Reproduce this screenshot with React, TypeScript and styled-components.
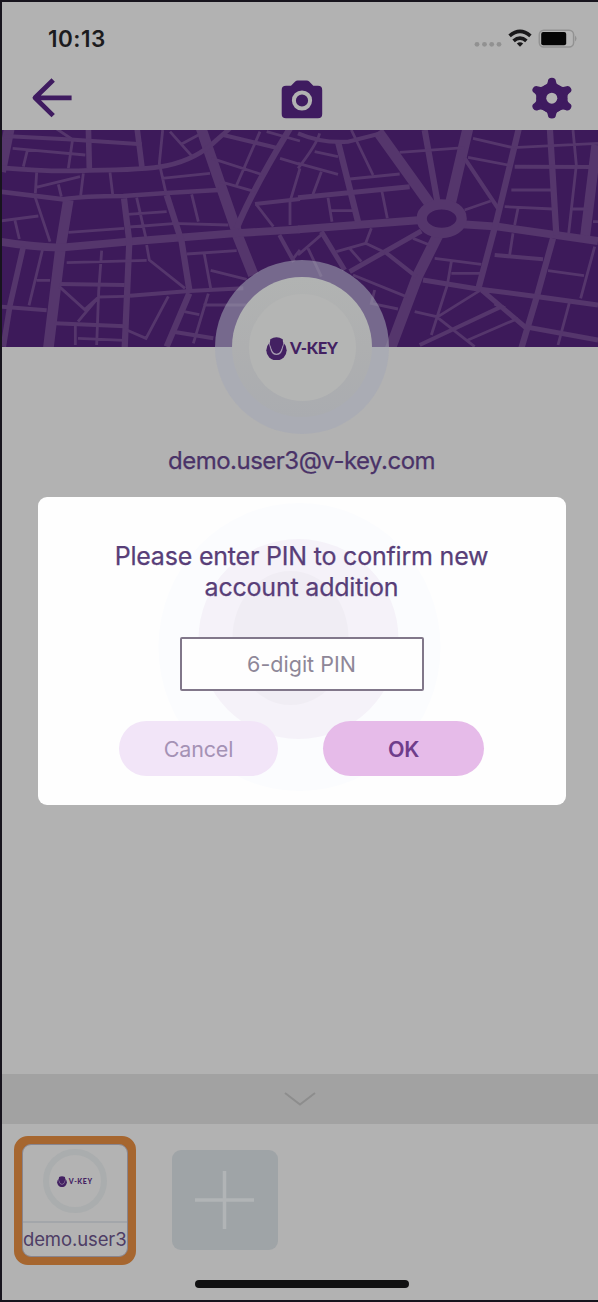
import React from "react";
import styled, { createGlobalStyle } from "styled-components";

const Global = createGlobalStyle`
  * { box-sizing: border-box; }
  body { margin: 0; background: #17141d; font-family: Inter, "Liberation Sans", sans-serif; }
  button, input { font-family: inherit; }
`;

const Screen = styled.div`
  position: relative;
  width: 598px;
  height: 1302px;
  border: solid #17141d;
  border-width: 2px 0 2px 2px;
  background: #b2b2b2;
  display: flex;
  flex-direction: column;
  overflow: hidden;
`;

const StatusBar = styled.div`
  height: 72px;
  flex: none;
  display: flex;
  justify-content: space-between;
  align-items: flex-start;
  padding: 23px 21px 0 46px;
`;

const Clock = styled.span`
  font-size: 22.5px;
  line-height: 28px;
  font-weight: 600;
  letter-spacing: 0.5px;
  color: #1c1b1d;
`;

const NavBar = styled.div`
  height: 56px;
  flex: none;
  display: flex;
  justify-content: space-between;
  padding: 3px 25px 0 29px;
`;

const Cover = styled.div`
  height: 217px;
  flex: none;
  background: #3d1a5a;
`;

const Profile = styled.div`
  display: flex;
  flex-direction: column;
  align-items: center;
  margin-top: -87px;
  padding-left: 4px;
  flex: 1;
`;

const Halo = styled.div`
  width: 174px;
  height: 174px;
  flex: none;
  border-radius: 50%;
  background: rgba(164, 168, 181, 0.56);
  display: grid;
  place-items: center;
  z-index: 0;
`;

const Ring = styled.div`
  width: 140px;
  height: 140px;
  border-radius: 50%;
  background: linear-gradient(#b1b3b2 0%, #aeafb0 50%, #aaacb0 100%);
  display: grid;
  place-items: center;
`;

const Disc = styled.div`
  width: 107px;
  height: 107px;
  border-radius: 50%;
  background: #b4b5b4;
  display: flex;
  align-items: center;
  justify-content: center;
  gap: 2.5px;
  padding-top: 3px;
`;

const Brand = styled.span<{ $small?: boolean }>`
  font-family: Lato, sans-serif;
  font-weight: 900;
  font-size: ${(p) => (p.$small ? 7 : 16.5)}px;
  line-height: 1;
  letter-spacing: ${(p) => (p.$small ? 0.6 : -0.3)}px;
  color: #432162;
`;

const Email = styled.div`
  margin-top: 11.5px;
  margin-right: 1px;
  font-size: 24px;
  line-height: 30px;
  letter-spacing: -0.5px;
  -webkit-text-stroke: 0.25px #4a3368;
  color: #4a3368;
`;

const Handle = styled.div`
  height: 50px;
  flex: none;
  background: #a2a2a2;
  display: flex;
  align-items: center;
  justify-content: center;
`;

const Tray = styled.div`
  height: 156px;
  flex: none;
  display: flex;
  gap: 36px;
  padding: 12px 0 0 12px;
`;

const Account = styled.div`
  width: 121.5px;
  height: 129px;
  border-radius: 14px;
  border: 8px solid #a6662f;
  display: flex;
  flex-direction: column;
  align-items: center;
  background: #a6662f;
`;

const AccountFace = styled.div`
  width: 106px;
  height: 113px;
  border: 1px solid #88858f;
  border-radius: 9px;
  background: #b3b3b3;
  display: flex;
  flex-direction: column;
  align-items: center;
`;

const MiniRing = styled.div`
  margin-top: 4px;
  width: 64px;
  height: 64px;
  flex: none;
  border-radius: 50%;
  border: 6.5px solid #aaadae;
  display: flex;
  align-items: center;
  justify-content: center;
  gap: 2px;
  padding-top: 1px;
`;

const AccountName = styled.div`
  margin-top: 7.5px;
  width: 104px;
  border-top: 2px solid #a3a6aa;
  padding-top: 2px;
  font-size: 18.5px;
  line-height: 28px;
  letter-spacing: -0.1px;
  white-space: nowrap;
  display: flex;
  justify-content: center;
  color: #4e3d65;
`;

const AddAccount = styled.button`
  margin: 14px 0 0;
  padding: 0;
  width: 106px;
  height: 100px;
  border: 0;
  border-radius: 9px;
  background: #9fa4a7;
  display: grid;
  place-items: center;
`;

const HomeIndicator = styled.div`
  width: 214px;
  height: 8px;
  flex: none;
  margin: 0 0 12px 193px;
  border-radius: 4px;
  background: #111112;
`;

const Dialog = styled.div`
  position: absolute;
  left: 35.5px;
  top: 495px;
  width: 528px;
  height: 308px;
  border-radius: 9px;
  overflow: hidden;
  background: #fefefe;
`;

const Ripples = styled.svg`
  position: absolute;
  inset: 0;
`;

const DialogBody = styled.div`
  position: relative;
  display: flex;
  flex-direction: column;
  align-items: center;
  padding-top: 44px;
`;

const Prompt = styled.div`
  font-size: 25px;
  line-height: 31px;
  text-align: center;
  white-space: nowrap;
  letter-spacing: -0.2px;
  -webkit-text-stroke: 0.25px #583e78;
  color: #583e78;
`;

const PinInput = styled.input`
  margin-top: 34px;
  width: 244px;
  height: 54px;
  padding: 0;
  border: 2px solid #81778a;
  border-radius: 2px;
  background: #fefefe;
  text-align: center;
  font-size: 21.5px;
  outline: none;
  &::placeholder { color: #8e8798; opacity: 1; }
`;

const Actions = styled.div`
  display: flex;
  gap: 45px;
  margin-top: 30px;
`;

const Pill = styled.button<{ $primary?: boolean }>`
  width: ${(p) => (p.$primary ? 161 : 159)}px;
  height: 55px;
  padding: 0;
  border: 0;
  border-radius: 28px;
  background: ${(p) => (p.$primary ? "#e6bbe9" : "#f2e5f8")};
  color: ${(p) => (p.$primary ? "#6f3d8b" : "#a592b5")};
  font-size: 21.5px;
  letter-spacing: -0.2px;
  font-weight: ${(p) => (p.$primary ? 600 : 400)};
`;

const P = "#3f1b60";

const StatusIcons = () => (
  <svg width="106" height="30" viewBox="471 25 106 30">
    <g fill="#919191">
      {[477, 484.5, 491.7, 499].map((x) => <circle key={x} cx={x} cy="44.3" r="2.4" />)}
    </g>
    <g fill="none" stroke="#19181a" strokeWidth="3.7">
      <path d="M509.6 35.9Q520 27 530.4 35.9" />
      <path d="M513.6 40.8Q520 35.3 526.4 40.8" />
    </g>
    <path d="M516.8 43.6Q520 41 523.2 43.6L520 46.8Z" fill="#19181a" />
    <rect x="539.3" y="30.2" width="34.3" height="16.8" rx="4.5" fill="#b6b6b6" stroke="#929292" strokeWidth="1.5" />
    <rect x="541.2" y="32" width="25" height="13.2" rx="2" fill="#050505" />
    <path d="M575 35.6Q578 38.6 575 41.6Z" fill="#929292" />
  </svg>
);

const BackIcon = () => (
  <svg width="44" height="44" viewBox="31 77 44 44" fill="none" stroke={P} strokeWidth="4.8">
    <path d="M71.6 97.8H36M53.2 80L35 97.8L53.2 115.6" strokeLinejoin="round" />
  </svg>
);

const CameraIcon = () => (
  <svg width="44" height="44" viewBox="280 77 44 44">
    <path fill={P} d="M286 85.8H291L295.2 81.5Q296.2 80.5 297.7 80.5H306.6Q308.2 80.5 309.2 81.5L313.3 85.8H318Q322.2 85.8 322.2 90V114Q322.2 118.3 318 118.3H286Q281.7 118.3 281.7 114V90Q281.7 85.8 286 85.8Z" />
    <circle cx="302" cy="100.5" r="8.1" fill="none" stroke="#b2b2b2" strokeWidth="4" />
  </svg>
);

const GearIcon = () => (
  <svg width="44" height="44" viewBox="529 77 44 44">
    <g fill={P} transform="translate(551.9 98.2) scale(1.07 1)">
      <circle r="14.6" />
      {[0, 60, 120, 180, 240, 300].map((a) => (
        <path key={a} transform={`rotate(${a})`} d="M-9 -11.3Q-4.2 -13.2 -3.8 -16.8Q-3.6 -20.4 0 -20.4T3.8 -16.8Q4.2 -13.2 9 -11.3Z" />
      ))}
    </g>
    <circle cx="551.8" cy="98.2" r="5.5" fill="#b2b2b2" />
  </svg>
);

const Shield = ({ size }: { size: number }) => (
  <svg width={size} height={size * 1.13} viewBox="0 0 21 24">
    <circle cx="10.5" cy="13.4" r="10.3" fill="#432162" />
    <path fill="none" stroke="#a69bb0" strokeWidth="1.4" d="M3.2 5.5L5.4 13.5Q6.8 17.6 10.5 17.6T15.6 13.5L17.8 5.5" />
    <path fill="#432162" d="M4.2 2.2Q10.5 -1.6 16.8 2.2L17.3 7L15 13Q13.8 16 10.5 16T6 13L3.7 7Z" />
  </svg>
);

// Street segments grouped by road width; each half uses a grid of thirds of a pixel.
const westRoads: [number, string][] = [
  [34, "M30 0L2 140M205 225L182 365L145 670M710 325L760 450M712 325L665 190L600 0"],
  [25, "M0 350Q90 365 182 368L385 350L700 325L900 313"],
  [20, "M372 220L388 350L374 670M500 210L545 350L568 495M568 505L500 665M710 310Q760 190 870 10"],
  [18, "M265 0L268 130M410 0L426 128M70 365L30 540L10 665"],
  [15, "M0 128Q160 142 268 136Q440 135 500 122Q590 103 650 45L690 10M0 200L190 223Q250 213 370 213L500 204L655 195"],
  [13, "M12 33L200 43L425 58M670 30L835 70M178 477L374 480M390 512L568 498L730 490M165 595L374 604M0 545L140 556M520 620L640 640M838 330L882 410M765 237L900 222"],
  [9, "M38 70L256 90M82 76L70 125M218 42L205 130M160 5L215 42M110 142L106 205M108 187L240 155M175 178L184 215M250 145L242 212M330 142L338 208M488 15L478 115L498 205M510 20L577 95M545 57L595 30M485 160L630 145M575 208L595 290M515 295L685 300M105 215L150 350M0 288L115 273M45 287L58 342M128 372L87 541M110 466L150 466M205 322L372 310M410 218L438 340M382 268L500 260M388 306L530 295M200 413L440 406M440 360L448 405L555 490M305 377L296 500L290 660M178 485L254 554L296 516L374 514M296 516L234 590M226 600V660M234 640L374 646M505 514L438 640L380 615M560 387L710 377M613 388L632 490M632 436L740 463M625 506L580 655M553 560L598 569M610 540L740 540M780 20L710 180M635 100L790 150M660 170L765 200M770 240L820 305M870 230V300M880 400L900 375M840 100L900 118M900 130L870 230M800 20L900 48"],
];
const eastRoads: [number, string][] = [
  [35, "M240 20L412 260M512 0L455 245M425 320L360 450L270 690"],
  [32, "M895 60L860 345"],
  [25, "M0 313L370 285M480 297L600 305L900 348"],
  [20, "M665 0L595 290L540 495M765 340L715 520L670 670M755 0L775 330M120 50L180 290M380 15L420 240"],
  [16, "M0 218L335 185M70 320L140 435M155 440L370 318M375 465L540 492L720 515L900 540M545 490L680 605L900 645"],
  [13, "M0 25Q70 55 150 50L250 25M500 100L600 250M590 390L735 403M650 125L900 126M260 380L355 455M365 660L610 545L590 535"],
  [9, "M0 130Q55 60 65 25M0 115L120 148M50 80L120 95M70 140L45 208M160 15L225 150M155 162L305 147M305 82L500 68M252 200L268 280M90 218L102 290M100 257H165M220 310L203 355L260 382M203 355L115 380M155 370L190 410M345 340L395 360M525 40L645 68L900 55M510 97L640 122M640 195H760M620 245L765 252M660 250L650 300M645 325L635 390M500 255L578 228M825 15L835 120L812 325M820 252H870M885 290H900M890 365L848 520M750 437L858 452M815 530L780 660M410 400L550 418M460 410L448 480L400 630M460 445H550M420 575L545 497M350 560L415 575L530 665M510 645L660 580M165 450L325 515M230 495L220 535L300 552M0 390L75 325M30 370L70 455"],
];

const MapArt = styled.svg`
  display: block;
`;

const StreetMap = () => (
  <MapArt width="596" height="217" viewBox="2 130 596 217" fill="none" stroke="#55366c">
    <g transform="translate(0 125) scale(.33333)">
      {westRoads.map(([w, d]) => <path key={w} strokeWidth={w * 0.94} d={d} />)}
    </g>
    <g transform="translate(298 125) scale(.33333)">
      {eastRoads.map(([w, d]) => <path key={w} strokeWidth={w * 0.94} d={d} />)}
      <ellipse cx="431" cy="281" rx="60" ry="43" fill="#3d1a5a" strokeWidth="31" />
    </g>
  </MapArt>
);

export default function App() {
  return (
    <>
      <Global />
      <Screen>
        <StatusBar>
          <Clock>10:13</Clock>
          <StatusIcons />
        </StatusBar>
        <NavBar>
          <BackIcon />
          <CameraIcon />
          <GearIcon />
        </NavBar>
        <Cover><StreetMap /></Cover>
        <Profile>
          <Halo>
            <Ring>
              <Disc>
                <Shield size={21} />
                <Brand>V-KEY</Brand>
              </Disc>
            </Ring>
          </Halo>
          <Email>demo.user3@v-key.com</Email>
        </Profile>
        <Handle>
          <svg width="34" height="18" viewBox="0 0 34 18" fill="none" stroke="#8d8d8d" strokeWidth="2">
            <path d="M2 3L17 14.5L32 3" />
          </svg>
        </Handle>
        <Tray>
          <Account>
            <AccountFace>
              <MiniRing>
                <Shield size={10} />
                <Brand $small>V-KEY</Brand>
              </MiniRing>
              <AccountName>demo.user3</AccountName>
            </AccountFace>
          </Account>
          <AddAccount aria-label="Add account">
            <svg width="60" height="60" viewBox="0 0 60 60" stroke="#b1b4b6" strokeWidth="3.5">
              <path d="M29.5 1V59M0 30H59" />
            </svg>
          </AddAccount>
        </Tray>
        <HomeIndicator />
        <Dialog role="dialog">
          <Ripples width="528" height="308" viewBox="37.5 497 528 308">
            <ellipse cx="299" cy="647" rx="141" ry="144" fill="#fbfcfe" />
            <circle cx="298" cy="639" r="100" fill="#f5f2f9" />
            <ellipse cx="290" cy="638" rx="58" ry="67" fill="#f0edf4" />
          </Ripples>
          <DialogBody>
            <Prompt>Please enter PIN to confirm new<br />account addition</Prompt>
            <PinInput placeholder="6-digit PIN" />
            <Actions>
              <Pill>Cancel</Pill>
              <Pill $primary>OK</Pill>
            </Actions>
          </DialogBody>
        </Dialog>
      </Screen>
    </>
  );
}
